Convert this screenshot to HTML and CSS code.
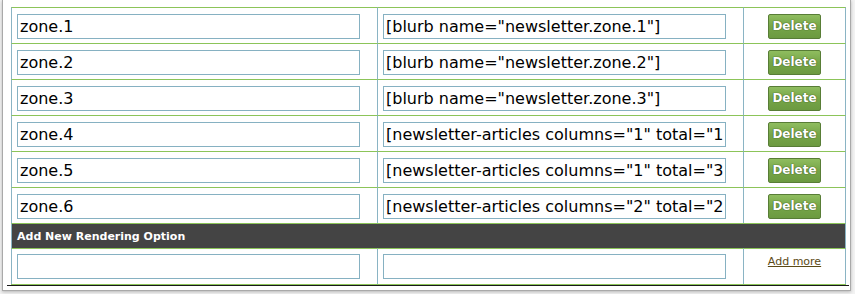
FILE: index.html
```html
<!DOCTYPE html>
<html lang="en">
<head>
    <meta charset="UTF-8">
    <title>Rendering Options</title>
    <link rel="stylesheet" href="styles.css">
</head>
<body>
    <div class="frame">
        <div class="wrap">
            <table class="options">
                <tr>
                    <td class="col-name"><input type="text" value="zone.1"></td>
                    <td class="col-value"><input type="text" value='[blurb name="newsletter.zone.1"]'></td>
                    <td class="col-action"><button class="btn-delete">Delete</button></td>
                </tr>
                <tr>
                    <td class="col-name"><input type="text" value="zone.2"></td>
                    <td class="col-value"><input type="text" value='[blurb name="newsletter.zone.2"]'></td>
                    <td class="col-action"><button class="btn-delete">Delete</button></td>
                </tr>
                <tr>
                    <td class="col-name"><input type="text" value="zone.3"></td>
                    <td class="col-value"><input type="text" value='[blurb name="newsletter.zone.3"]'></td>
                    <td class="col-action"><button class="btn-delete">Delete</button></td>
                </tr>
                <tr>
                    <td class="col-name"><input type="text" value="zone.4"></td>
                    <td class="col-value"><input type="text" value='[newsletter-articles columns="1" total="1"]'></td>
                    <td class="col-action"><button class="btn-delete">Delete</button></td>
                </tr>
                <tr>
                    <td class="col-name"><input type="text" value="zone.5"></td>
                    <td class="col-value"><input type="text" value='[newsletter-articles columns="1" total="3"]'></td>
                    <td class="col-action"><button class="btn-delete">Delete</button></td>
                </tr>
                <tr>
                    <td class="col-name"><input type="text" value="zone.6"></td>
                    <td class="col-value"><input type="text" value='[newsletter-articles columns="2" total="2"]'></td>
                    <td class="col-action"><button class="btn-delete">Delete</button></td>
                </tr>
                <tr>
                    <td class="section-title" colspan="3">Add New Rendering Option</td>
                </tr>
                <tr class="new-row">
                    <td class="col-name"><input type="text" value=""></td>
                    <td class="col-value"><input type="text" value=""></td>
                    <td class="col-action"><a href="#" class="add-more">Add more</a></td>
                </tr>
            </table>
        </div>
    </div>
</body>
</html>
```

FILE: styles.css
```css
body {
    margin: 0;
    padding: 0 4px 3px 2px;
    background: #f2f2f2;
    font-family: "DejaVu Sans", Verdana, sans-serif;
}
.frame {
    background: white;
    border: 1px solid #a9a9a9;
    border-top: none;
    padding: 0 1px 4px 4px;
    box-shadow: 0 1px 3px rgba(0, 0, 0, 0.25);
}
.wrap {
    padding: 7px 3px 0 4px;
    border-bottom: 1px solid #1a1a1a;
}
.options {
    border-collapse: separate;
    border-spacing: 0;
    table-layout: fixed;
    width: 835px;
    border-bottom: 1px solid #8cc459;
}
.options td {
    box-sizing: border-box;
    border-top: 1px solid #8cc459;
    border-left: 1px solid #8ab4c4;
    padding: 0;
    height: 36px;
}
.options td.col-action {
    border-right: 1px solid #8ab4c4;
    width: 103px;
    text-align: center;
}
.col-name, .col-value {
    width: 366px;
    padding: 0 0 0 5px !important;
}
.options input {
    box-sizing: border-box;
    display: block;
    width: 343px;
    height: 25px;
    margin: 1px 0 0 0;
    padding: 0 2px;
    border: 1px solid #86b1c2;
    font-family: "DejaVu Sans", Verdana, sans-serif;
    font-size: 16px;
    color: #000;
    background: white;
    outline: none;
}
.btn-delete {
    display: block;
    margin: 1px auto 0;
    width: 53px;
    height: 25px;
    padding: 0;
    border: 1px solid #587d36;
    border-radius: 2px;
    background: linear-gradient(#8fbd5f, #76a548 50%, #6c9a40);
    color: white;
    font-family: "DejaVu Sans", Verdana, sans-serif;
    font-size: 12px;
    font-weight: bold;
    text-shadow: 0 0 1px #3d5a22, 0 0 1px #3d5a22;
    cursor: pointer;
}
.options td.section-title {
    height: 25px;
    background: #444;
    color: white;
    font-size: 11px;
    font-weight: bold;
    padding: 0 0 0 5px;
    border-right: 1px solid #8ab4c4;
}
.new-row td {
    vertical-align: top;
}
.new-row td.col-name, .new-row td.col-value {
    padding-top: 5px !important;
}
.new-row input {
    margin-top: 0;
}
.add-more {
    display: inline-block;
    margin-top: 6px;
    font-size: 11px;
    color: #5c4a16;
}
```
